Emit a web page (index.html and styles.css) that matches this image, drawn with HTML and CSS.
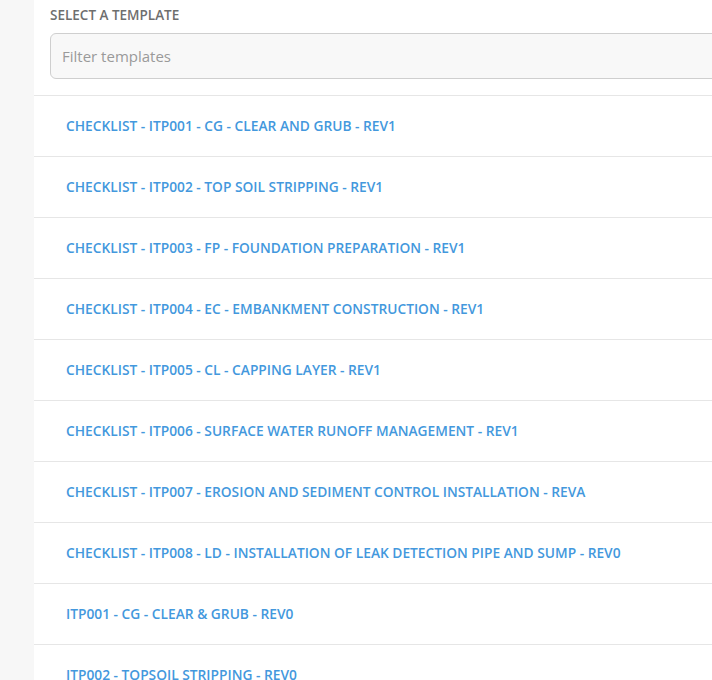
FILE: index.html
```html
<!DOCTYPE html>
<html>
<head>
<meta charset="utf-8">
<link rel="stylesheet" href="styles.css">
</head>
<body>
<div class="page">
  <aside class="sidebar"></aside>
  <main class="panel">
    <div class="header">
      <div class="title">SELECT A TEMPLATE</div>
      <input class="filter" type="text" placeholder="Filter templates">
    </div>
    <ul class="list">
      <li class="item"><a href="#">CHECKLIST - ITP001 - CG - CLEAR AND GRUB - REV1</a></li>
      <li class="item"><a href="#">CHECKLIST - ITP002 - TOP SOIL STRIPPING - REV1</a></li>
      <li class="item"><a href="#">CHECKLIST - ITP003 - FP - FOUNDATION PREPARATION - REV1</a></li>
      <li class="item"><a href="#">CHECKLIST - ITP004 - EC - EMBANKMENT CONSTRUCTION - REV1</a></li>
      <li class="item"><a href="#">CHECKLIST - ITP005 - CL - CAPPING LAYER - REV1</a></li>
      <li class="item"><a href="#">CHECKLIST - ITP006 - SURFACE WATER RUNOFF MANAGEMENT - REV1</a></li>
      <li class="item"><a href="#">CHECKLIST - ITP007 - EROSION AND SEDIMENT CONTROL INSTALLATION - REVA</a></li>
      <li class="item"><a href="#">CHECKLIST - ITP008 - LD - INSTALLATION OF LEAK DETECTION PIPE AND SUMP - REV0</a></li>
      <li class="item"><a href="#">ITP001 - CG - CLEAR &amp; GRUB - REV0</a></li>
      <li class="item"><a href="#">ITP002 - TOPSOIL STRIPPING - REV0</a></li>
    </ul>
  </main>
</div>
</body>
</html>
```
FILE: styles.css
```css
html, body {
  margin: 0;
  padding: 0;
  height: 100%;
  overflow: hidden;
  font-family: "Open Sans", "Noto Sans", sans-serif;
  background: #ffffff;
}
.page {
  display: flex;
  height: 100%;
}
.sidebar {
  width: 34px;
  flex: 0 0 34px;
  background: #f7f7f7;
}
.panel {
  flex: 1;
  min-width: 0;
  overflow: hidden;
  background: #ffffff;
}
.header {
  padding: 7px 0 16px 16px;
}
.title {
  font-size: 13.5px;
  font-weight: 600;
  color: #6e6e6e;
  line-height: 17px;
}
.filter {
  display: block;
  box-sizing: border-box;
  margin-top: 9px;
  width: 720px;
  height: 46px;
  padding: 0 11px;
  border: 1px solid #cfcfcf;
  border-radius: 6px;
  background: #f8f8f8;
  font-family: inherit;
  font-size: 15px;
  color: #444;
  outline: none;
}
.filter::placeholder {
  color: #9a9a9a;
}
.list {
  list-style: none;
  margin: 0;
  padding: 0;
}
.item {
  box-sizing: border-box;
  border-top: 1px solid #e6e6e6;
  height: 61px;
  display: flex;
  align-items: center;
  padding: 0 0 2px 32px;
}
.item a {
  color: #4398dd;
  text-decoration: none;
  font-size: 13.75px;
  font-weight: 600;
  white-space: nowrap;
}
```
